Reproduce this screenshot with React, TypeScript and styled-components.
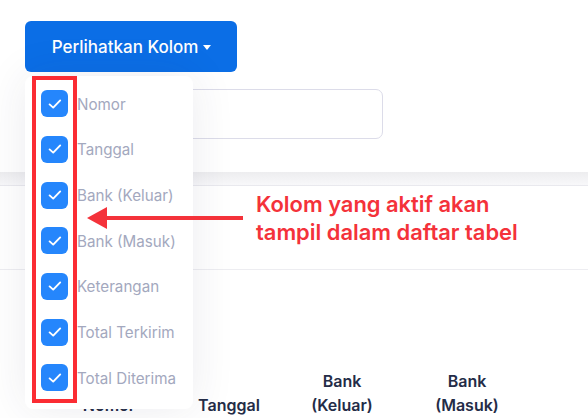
import React from "react";
import styled, { createGlobalStyle } from "styled-components";

const Global = createGlobalStyle`
  html, body { margin: 0; padding: 0; background: #ffffff; }
  body { font-family: Inter, "Noto Sans", sans-serif; overflow: hidden; }
  * { box-sizing: border-box; }
`;

const Page = styled.div`
  position: relative;
  width: 588px;
  height: 418px;
  overflow: hidden;
  background: #ffffff;
`;

const TopCard = styled.div`
  display: flex;
  flex-direction: column;
  align-items: flex-start;
  gap: 17px;
  padding: 21px 25px 33px;
  background: #ffffff;
`;

const MenuAnchor = styled.div`
  position: relative;
  z-index: 5;
`;

const ToggleButton = styled.button`
  display: flex;
  align-items: center;
  justify-content: center;
  gap: 5px;
  width: 212px;
  height: 51px;
  border: none;
  border-radius: 6px;
  background: #0b6ee6;
  color: #ffffff;
  font-family: Inter, sans-serif;
  font-size: 17px;
  font-weight: 500;
  padding: 0 0 0 1px;
`;

const Caret = styled.span`
  width: 0;
  height: 0;
  border-left: 4.5px solid transparent;
  border-right: 4.5px solid transparent;
  border-top: 5px solid #ffffff;
  margin-top: 1px;
`;

const Dropdown = styled.div`
  position: absolute;
  top: 55px;
  left: 0;
  width: 168px;
  height: 333px;
  padding: 5px 0 8px;
  background: #ffffff;
  border-radius: 8px;
  box-shadow: 0 0 45px rgba(40, 40, 80, 0.09);
  display: flex;
  flex-direction: column;
`;

const Highlight = styled.div`
  position: absolute;
  left: 7px;
  top: 0;
  width: 45px;
  height: 327px;
  border: 4px solid #fb2c33;
  pointer-events: none;
`;

const MenuItem = styled.div`
  height: 45.67px;
  display: flex;
  align-items: center;
  gap: 9px;
  padding-left: 16px;
`;

const Check = styled.span`
  width: 27px;
  height: 27px;
  border-radius: 6px;
  background: #2586fc;
  display: flex;
  align-items: center;
  justify-content: center;
  flex: none;
`;

const Label = styled.span`
  font-size: 15.2px;
  color: #a3a8be;
  white-space: nowrap;
  margin-top: 1px;
`;

const SearchInput = styled.div`
  width: 358px;
  height: 50px;
  border: 1px solid #dcdce9;
  border-radius: 7px;
  background: #ffffff;
`;

const Band = styled.div`
  height: 14px;
  background: linear-gradient(#ededef, #f8f8fa);
  border-bottom: 1px solid #e9e9ee;
`;

const BodyRow = styled.div`
  height: 84px;
  border-bottom: 1px solid #ededf1;
`;

const HeadRow = styled.div`
  display: grid;
  grid-template-columns: 120px 120px 106px 144px;
  align-items: end;
  padding: 99px 0 0 49px;
`;

const HeadCell = styled.div`
  text-align: center;
  font-size: 16px;
  font-weight: 600;
  line-height: 24px;
  color: #242c47;
`;

const Callout = styled.div`
  position: absolute;
  z-index: 10;
  left: 87px;
  top: 190px;
  display: flex;
  align-items: center;
  gap: 13px;
`;

const Note = styled.div`
  font-size: 21.9px;
  font-weight: 600;
  line-height: 28px;
  color: #f4323a;
  text-shadow: 0 0 3px rgba(255, 255, 255, 0.9);
`;

const items = [
  "Nomor",
  "Tanggal",
  "Bank (Keluar)",
  "Bank (Masuk)",
  "Keterangan",
  "Total Terkirim",
  "Total Diterima",
];

const CheckMark = () => (
  <svg width="16" height="16" viewBox="0 0 16 16" fill="none">
    <path d="M2.6 8.4 L6.2 11.6 L13.2 4.4" stroke="#fff" strokeWidth="1.9" strokeLinecap="round" strokeLinejoin="round" />
  </svg>
);

const Arrow = () => (
  <svg width="156" height="24" viewBox="0 0 156 24">
    <path d="M0 12 L20 1 L20 23 Z" fill="#f4323a" />
    <rect x="18" y="10" width="138" height="4" fill="#f4323a" />
  </svg>
);

export default function App() {
  return (
    <Page>
      <Global />
      <TopCard>
        <MenuAnchor>
          <ToggleButton>
            Perlihatkan Kolom <Caret />
          </ToggleButton>
          <Dropdown>
            {items.map((it) => (
              <MenuItem key={it}>
                <Check>
                  <CheckMark />
                </Check>
                <Label>{it}</Label>
              </MenuItem>
            ))}
            <Highlight />
          </Dropdown>
        </MenuAnchor>
        <SearchInput />
      </TopCard>
      <Band />
      <BodyRow />
      <HeadRow>
        <HeadCell>Nomor</HeadCell>
        <HeadCell>Tanggal</HeadCell>
        <HeadCell>
          Bank
          <br />
          (Keluar)
        </HeadCell>
        <HeadCell>
          Bank
          <br />
          (Masuk)
        </HeadCell>
      </HeadRow>
      <Callout>
        <Arrow />
        <Note>
          Kolom yang aktif akan
          <br />
          tampil dalam daftar tabel
        </Note>
      </Callout>
    </Page>
  );
}
